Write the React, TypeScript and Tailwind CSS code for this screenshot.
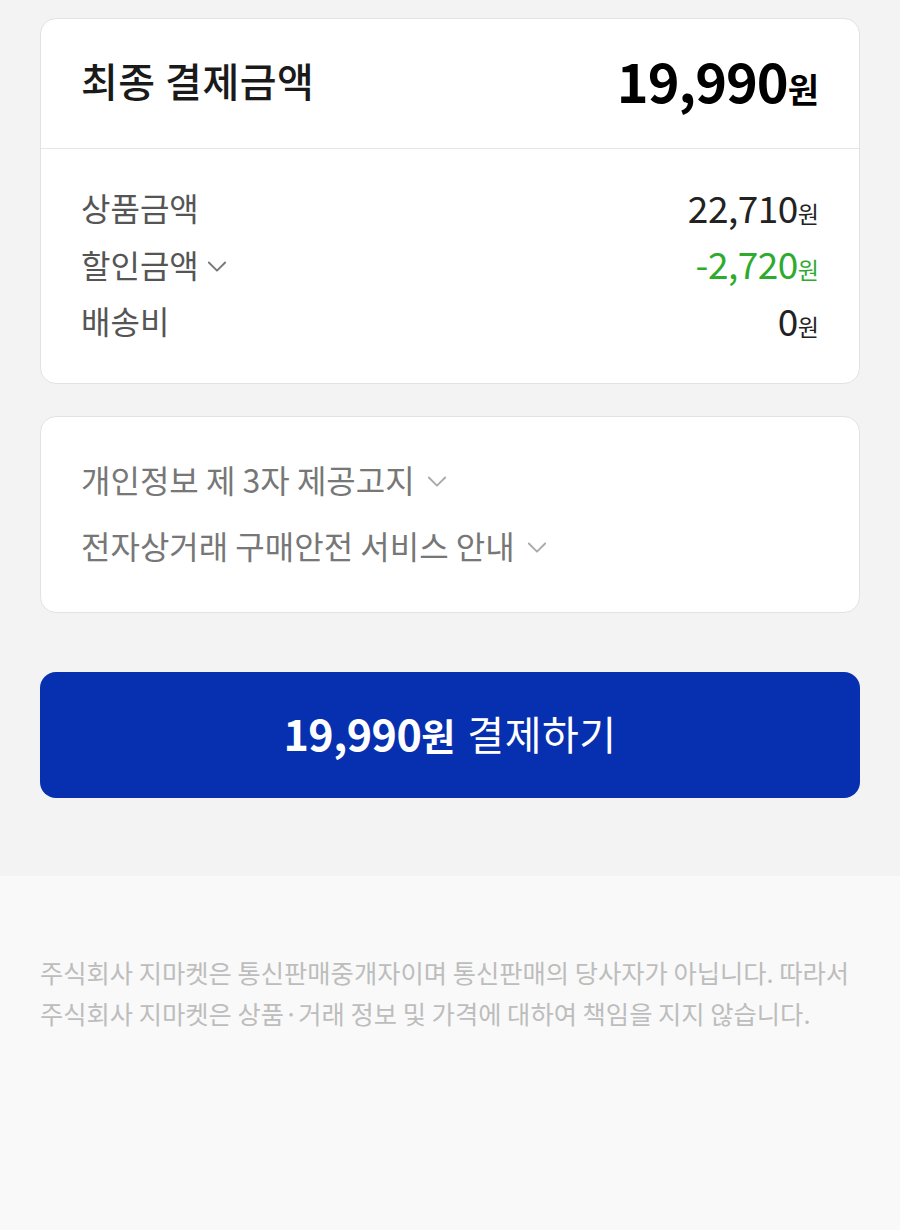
import React from 'react';

const font = { fontFamily: '"Noto Sans CJK KR", "Noto Sans", sans-serif' };

function Chevron({ className }: { className?: string }) {
  return (
    <svg viewBox="0 0 24 24" className={className} fill="none" stroke="currentColor" strokeWidth={1.6} strokeLinecap="round" strokeLinejoin="round">
      <path d="M5 9l7 7 7-7" />
    </svg>
  );
}

export default function App() {
  const rows = [
    { label: '상품금액', value: '22,710', color: 'text-[#222]', toggle: false },
    { label: '할인금액', value: '-2,720', color: 'text-[#2eab2e]', toggle: true },
    { label: '배송비', value: '0', color: 'text-[#222]', toggle: false },
  ];

  return (
    <div className="min-h-[1230px] w-[900px] bg-[#f9f9f9]" style={font}>
      <div className="bg-[#f3f3f3] px-10 pt-[18px] pb-[78px]">
        {/* summary card */}
        <div className="bg-white border border-[#e2e2e2] rounded-2xl">
          <div className="h-[130px] px-10 pb-[8px] flex items-center justify-between border-b border-[#e6e6e6]">
            <span className="text-[40px] font-medium text-[#1a1a1a] tracking-[0.5px]">최종 결제금액</span>
            <span className="flex items-baseline font-bold text-black">
              <span className="text-[54px] tracking-[-1px] leading-none">19,990</span>
              <span className="text-[34px] leading-none">원</span>
            </span>
          </div>
          <div className="px-10 pt-[30px] pb-[34px]">
            {rows.map((r) => (
              <div key={r.label} className="h-[56.5px] flex items-center justify-between">
                <span className="flex items-center gap-1 text-[32px] text-[#555]">
                  {r.label}
                  {r.toggle && <Chevron className="w-7 h-7 text-[#777] mt-1" />}
                </span>
                <span className={`flex items-baseline ${r.color}`}>
                  <span className="text-[37px] tracking-[-0.5px]">{r.value}</span>
                  <span className="text-[23px]">원</span>
                </span>
              </div>
            ))}
          </div>
        </div>

        {/* notices */}
        <div className="mt-8 bg-white border border-[#e2e2e2] rounded-2xl px-10 pt-[29px] pb-[34px]">
          {['개인정보 제 3자 제공고지', '전자상거래 구매안전 서비스 안내'].map((t) => (
            <div key={t} className="h-[66px] flex items-center gap-2 text-[32px] text-[#777]">
              {t}
              <Chevron className="w-7 h-7 text-[#aaa] mt-1" />
            </div>
          ))}
        </div>

        {/* pay button */}
        <button className="mt-[59px] w-full h-[126px] rounded-2xl bg-[#0630b0] text-white flex items-center justify-center gap-3 pb-1">
          <span className="flex items-baseline font-bold">
            <span className="text-[43px] tracking-[-0.5px]">19,990</span>
            <span className="text-[37px]">원</span>
          </span>
          <span className="text-[40px] tracking-[0.5px]">결제하기</span>
        </button>
      </div>

      {/* footer */}
      <div className="px-10 pt-[76px] text-[25.3px] leading-[41px] text-[#bdbdbd]">
        <p>주식회사 지마켓은 통신판매중개자이며 통신판매의 당사자가 아닙니다. 따라서</p>
        <p>주식회사 지마켓은 상품·거래 정보 및 가격에 대하여 책임을 지지 않습니다.</p>
      </div>
    </div>
  );
}
